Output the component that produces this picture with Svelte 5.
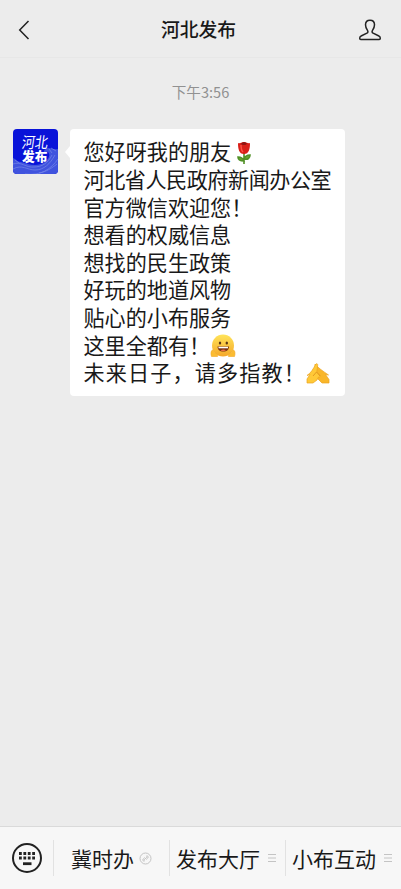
<script lang="ts">
	type Line = { text: string; emoji?: 'rose' | 'hug' | 'salute'; fit?: 'tight' | 'loose' };

	// full-width punctuation
	const bang = '\uFF01';
	const comma = '\uFF0C';

	const lines: Line[] = [
		{ text: '您好呀我的朋友', emoji: 'rose' },
		{ text: '河北省人民政府新闻办公室', fit: 'tight' },
		{ text: `官方微信欢迎您${bang}` },
		{ text: '想看的权威信息' },
		{ text: '想找的民生政策' },
		{ text: '好玩的地道风物' },
		{ text: '贴心的小布服务' },
		{ text: `这里全都有${bang}`, emoji: 'hug' },
		{ text: `未来日子${comma}请多指教${bang}`, emoji: 'salute', fit: 'loose' },
	];

	const menus = [
		{ label: '冀时办', link: true },
		{ label: '发布大厅', link: false },
		{ label: '小布互动', link: false },
	];
</script>

<div class="screen">
	<header>
		<button type="button" class="back" aria-label="返回">
			<svg width="12" height="20" viewBox="0 0 12 20"><path d="M10.5 1 1.7 10l8.8 9" /></svg>
		</button>
		<h1>河北发布</h1>
		<button type="button" class="profile" aria-label="资料">
			<svg width="24" height="24" viewBox="0 0 24 24">
				<path d="M12 2.2c-2.8 0-4.5 1.9-4.5 4.6 0 2.6.9 4.2 2.1 5.8.6.9.4 1.9-.7 2.5l-5.8 2.9C2 18.500 1.700 19.200 1.700 20.300c0 .8.4 1.100 1.100 1.100h18.400c.7 0 1.100-.3 1.100-1.100 0-1.100-.3-1.800-1.400-2.300l-5.800-2.900c-1.100-.6-1.300-1.600-.7-2.500 1.200-1.600 2.100-3.200 2.100-5.800 0-2.700-1.700-4.600-4.500-4.600Z" />
			</svg>
		</button>
	</header>

	<main>
		<time>下午3:56</time>
		<div class="message">
			<div class="avatar">
				<svg width="45" height="45" viewBox="0 0 45 45" aria-hidden="true">
					<path class="wave" d="M0 29c3 1 4 4 8 4 8 3 19 5 25-1 4-4 4-7 2-9-2-1-3 1-2 2-4-1-2-5 2-6 4 0 6 2 10 1v25H0Z" />
					<path class="ripple" d="M0 35c8-3 13 4 21 3 8 0 14-4 18-12M0 40c9-5 14 1 22 1 9 0 15-6 20-15M12 45c16 2 26-5 33-15M2 31l4 3m30-14 3 4m-1-5 5 3M26 44c7-1 13-5 18-9" />
				</svg>
				<span class="script">河北</span>
				<span class="bold">发布</span>
			</div>
			<div class="bubble">
				{#each lines as line}
					<p class={line.fit}>
						<span>{line.text}</span>
						{#if line.emoji === 'rose'}
							<svg class="rose" width="18" height="24" viewBox="0 0 18 24">
								<path d="M9 11v12M9 20c-4 0-6-2-6-4 3 0 5 1 6 4Zm0-2c1-3 3-4 6-4 0 3-2 5-6 4Z" fill="#68a531" stroke="#509026" stroke-width="1.6" />
								<path d="M3 2c2 1 3-1 6-1s4 2 6 1c0 6-1 11-6 11S3 8 3 2Z" fill="#d91f18" />
								<path d="M6 2.5c2-2 4-2 6 0-1 2-5 2-6 0Z" fill="#8e1512" />
								<path d="M6 4c0 4 1 6 2 7" fill="none" stroke="#fa5144" stroke-width="1.5" />
							</svg>
						{:else if line.emoji === 'hug'}
							<svg class="hug" width="26" height="24" viewBox="0 0 26 24">
								<defs>
									<linearGradient id="face" x2="0" y2="1">
										<stop stop-color="#ffe45a" />
										<stop offset="1" stop-color="#f5a829" />
									</linearGradient>
								</defs>
								<circle cx="13" cy="11.5" r="11" fill="url(#face)" />
								<path d="M1.5 22.5c-1-3-.5-6 1-6.5 1.500 0 1 2 2.500 3 2 .5 3 2 2.500 3.500Zm23 0c1-3 .5-6-1-6.500-1.500 0-1 2-2.500 3-2 .5-3 2-2.500 3.500Z" fill="#fbbc31" stroke="#f2a728" stroke-width=".6" />
								<ellipse cx="10" cy="9" rx="1.2" ry="1.5" fill="#593515" />
								<ellipse cx="16.8" cy="9" rx="1.2" ry="1.5" fill="#593515" />
								<path d="M7.5 12.5H19c0 3-2 5-5.7 5s-5.800-2-5.800-5Z" fill="#79330e" />
								<path d="M8.5 12.8H18v1.500H8.500Z" fill="#fff" />
								<path d="M10.5 16.2c2-.8 4-.8 5.500 0-1 1-4 1.200-5.500 0Z" fill="#ed6c47" />
							</svg>
						{:else if line.emoji === 'salute'}
							<svg class="salute" width="24" height="21" viewBox="0 0 24 21">
								<path d="M9 1c3 4 8 7 13.5 11l-3-.5 3.500 5V20h-7l-6-6Z" fill="#f9b629" stroke="#eba321" stroke-width=".7" />
								<path d="M1 12.5C5 10 7.500 5.500 9.500 1.500c1-1.500 2.500-.7 2.200.8L10.800 9l3.200 3c1 1.200 0 2.500-1.500 2L11 17l-4 3H1v-4l3-4.500Z" fill="#ffc938" stroke="#eba321" stroke-width=".7" />
								<path d="m7 13 3.5-4 3.5 4" fill="none" stroke="#e49a20" />
							</svg>
						{/if}
					</p>
				{/each}
			</div>
		</div>
	</main>

	<footer>
		<button type="button" class="keyboard" aria-label="键盘">
			<svg width="32" height="32" viewBox="0 0 32 32">
				<circle cx="16" cy="16" r="14" />
				<path d="M8 11.5h16M8 16h16" stroke-dasharray="2.8 1.6" />
				<path d="M12 21.7h8.5" />
			</svg>
		</button>
		{#each menus as menu}
			<button type="button" class="menu" class:link={menu.link}>
				<span>{menu.label}</span>
				{#if menu.link}
					<svg width="13" height="13" viewBox="0 0 13 13">
						<circle cx="6.5" cy="6.5" r="5.5" />
						<path d="M5.2 7.800 7.800 5.200M5.800 5.500 4.200 7c-1.200 1.300.4 2.900 1.700 1.700M7.200 7.500 8.800 6c1.200-1.300-.4-2.900-1.700-1.700" />
					</svg>
				{:else}
					<svg width="8" height="10" viewBox="0 0 8 10"><path d="M0 1.5h8M0 5h8M0 8.5h8" /></svg>
				{/if}
			</button>
		{/each}
	</footer>
</div>

<style>
	:global(body) {
		background: #ececec;
	}

	.screen {
		display: flex;
		flex-direction: column;
		height: 889px;
		overflow: hidden;
		background: #ececec;
		color: #191919;
		font-family: 'Noto Sans CJK SC', sans-serif;
	}

	button {
		border: 0;
		padding: 0;
		background: none;
		color: inherit;
		font: inherit;
	}

	svg {
		display: block;
		flex: none;
	}

	header {
		box-sizing: border-box;
		display: grid;
		grid-template-columns: 60px 1fr 60px;
		align-items: center;
		height: 58px;
		border-bottom: 1px solid #e7e7e7;
	}

	header svg {
		fill: none;
		stroke: #222;
		stroke-width: 1.5;
	}

	.back {
		padding: 2px 0 0 18px;
	}

	.profile {
		padding: 3px 0 0 17px;
	}

	h1 {
		margin: 1px 4px 0 0;
		font-size: 18.8px;
		line-height: 28px;
		font-weight: 500;
		text-align: center;
	}

	main {
		flex: 1;
	}

	time {
		display: block;
		margin-top: 23px;
		font-size: 14.6px;
		line-height: 21px;
		text-align: center;
		color: #919191;
	}

	.message {
		display: flex;
		gap: 12px;
		margin: 27px 0 0 13px;
	}

	.avatar {
		position: relative;
		width: 45px;
		height: 45px;
		border-radius: 4px;
		overflow: hidden;
		background: #0913d9;
		color: #fff;
		text-align: center;
	}

	.avatar svg,
	.avatar span {
		position: absolute;
		top: 0;
		left: 0;
	}

	.wave {
		fill: #4053de;
	}

	.ripple {
		fill: none;
		stroke: #7788ea;
		stroke-width: 0.7;
	}

	.avatar .script {
		top: 4px;
		left: 9px;
		font-size: 13px;
		line-height: 18px;
		transform: skewX(-8deg) scaleY(1.2);
	}

	.avatar .bold {
		top: 18px;
		left: 9px;
		font-size: 12.7px;
		line-height: 18px;
		font-weight: 900;
	}

	.bubble {
		position: relative;
		box-sizing: border-box;
		width: 275px;
		height: 267px;
		padding: 9.4px 0 0 13.5px;
		border-radius: 4px;
		background: #fff;
	}

	.bubble::before {
		content: '';
		position: absolute;
		top: 17px;
		left: -5px;
		border: solid transparent;
		border-width: 6px 5px 6px 0;
		border-right-color: #fff;
	}

	p {
		display: flex;
		align-items: center;
		height: 27.6px;
		margin: 0;
		font-size: 21.1px;
		line-height: 27.6px;
		white-space: nowrap;
	}

	.tight {
		letter-spacing: -0.45px;
	}

	.loose {
		letter-spacing: 1.15px;
	}

	.rose {
		margin: 2px 0 0 4px;
	}

	.hug,
	.salute {
		margin-top: 1px;
	}

	footer {
		box-sizing: border-box;
		display: grid;
		grid-template-columns: 53px 116px 116px 116px;
		align-items: center;
		height: 63px;
		border-top: 1px solid #dadada;
		background: #f7f7f7;
	}

	.keyboard {
		padding: 0 0 0 11px;
	}

	.keyboard svg {
		fill: none;
		stroke: #222;
		stroke-width: 2;
	}

	.keyboard path {
		stroke-width: 2.8;
	}

	.menu {
		display: flex;
		align-items: center;
		height: 36px;
		padding-left: 6px;
		border-left: 1px solid #e2e2e2;
		gap: 8px;
		font-size: 21px;
		line-height: 32px;
		white-space: nowrap;
	}

	.menu.link {
		padding-left: 17px;
		gap: 5px;
	}

	.menu span {
		margin-top: -1px;
	}

	.menu svg {
		fill: none;
		stroke: #c4c4c4;
		stroke-width: 1;
	}
</style>
